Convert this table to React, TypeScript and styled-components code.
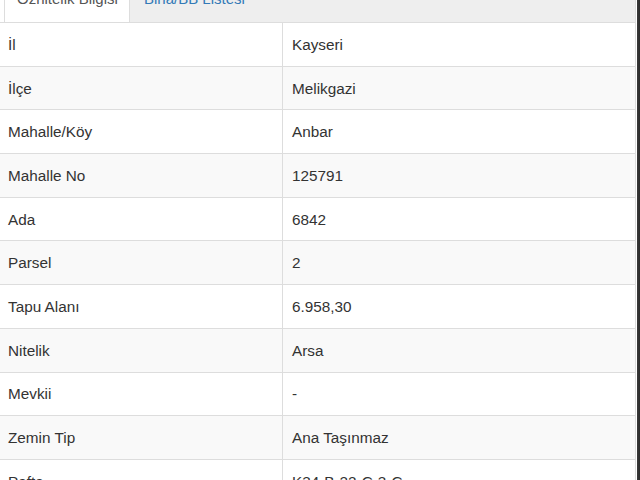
import React from "react";
import styled, { createGlobalStyle } from "styled-components";

const Global = createGlobalStyle`
  html, body { margin: 0; padding: 0; background: #ffffff; overflow: hidden; }
  body { font-family: "Liberation Sans", Arial, sans-serif; }
`;

const Frame = styled.div`
  width: 640px;
  height: 480px;
  display: flex;
  overflow: hidden;
`;

const Panel = styled.div`
  flex: 1;
  display: flex;
  flex-direction: column;
  border-right: 1px solid #dddddd;
  overflow: hidden;
`;

const EdgeBar = styled.div`
  width: 4px;
  background: linear-gradient(to right, #ffffff 0, #ffffff 1px, #3a3a3a 1px, #2a2a2a 100%);
`;

const TabStrip = styled.div`
  height: 22px;
  flex-shrink: 0;
  display: flex;
  align-items: flex-end;
  background: #eeeeee;
  padding-left: 4px;
  box-shadow: inset 4px 0 0 #ffffff;
`;

const Tab = styled.div<{ $active?: boolean }>`
  height: 100%;
  display: flex;
  align-items: flex-end;
  box-sizing: border-box;
  padding: 0 ${(p) => (p.$active ? "13px" : "14px")} 0 ${(p) => (p.$active ? "12px" : "14px")};
  width: ${(p) => (p.$active ? "126px" : "auto")};
  background: ${(p) => (p.$active ? "#ffffff" : "transparent")};
  border-left: ${(p) => (p.$active ? "1px solid #dddddd" : "none")};
  border-right: ${(p) => (p.$active ? "1px solid #dddddd" : "none")};
  color: ${(p) => (p.$active ? "#555555" : "#337ab7")};
  font-size: 15px;
  line-height: 15px;
  white-space: nowrap;
`;

const TabLabel = styled.span`
  display: block;
  transform: translateY(-16px);
`;

const Table = styled.div`
  flex-shrink: 0;
  display: grid;
  grid-template-columns: 282px 1fr;
  grid-auto-rows: 43.7px;
`;

const Cell = styled.div<{ $striped: boolean; $value?: boolean }>`
  display: flex;
  align-items: center;
  box-sizing: border-box;
  border-top: 1px solid #dddddd;
  border-left: ${(p) => (p.$value ? "1px solid #dddddd" : "none")};
  padding-left: ${(p) => (p.$value ? "9px" : "8px")};
  padding-top: 1px;
  background: ${(p) => (p.$striped ? "#f9f9f9" : "#ffffff")};
  color: #333333;
  font-size: 15.3px;
  white-space: nowrap;
`;

const rows: [string, string][] = [
  ["İl", "Kayseri"],
  ["İlçe", "Melikgazi"],
  ["Mahalle/Köy", "Anbar"],
  ["Mahalle No", "125791"],
  ["Ada", "6842"],
  ["Parsel", "2"],
  ["Tapu Alanı", "6.958,30"],
  ["Nitelik", "Arsa"],
  ["Mevkii", "-"],
  ["Zemin Tip", "Ana Taşınmaz"],
  ["Pafta", "K34-B-22-C-3-C"],
];

export default function App() {
  return (
    <Frame>
      <Global />
      <Panel>
        <TabStrip>
          <Tab $active>
            <TabLabel>Öznitelik Bilgisi</TabLabel>
          </Tab>
          <Tab>
            <TabLabel>Bina/BB Listesi</TabLabel>
          </Tab>
        </TabStrip>
        <Table>
          {rows.map(([k, v], i) => (
            <React.Fragment key={k}>
              <Cell $striped={i % 2 === 1}>{k}</Cell>
              <Cell $striped={i % 2 === 1} $value>
                {v}
              </Cell>
            </React.Fragment>
          ))}
        </Table>
      </Panel>
      <EdgeBar />
    </Frame>
  );
}
